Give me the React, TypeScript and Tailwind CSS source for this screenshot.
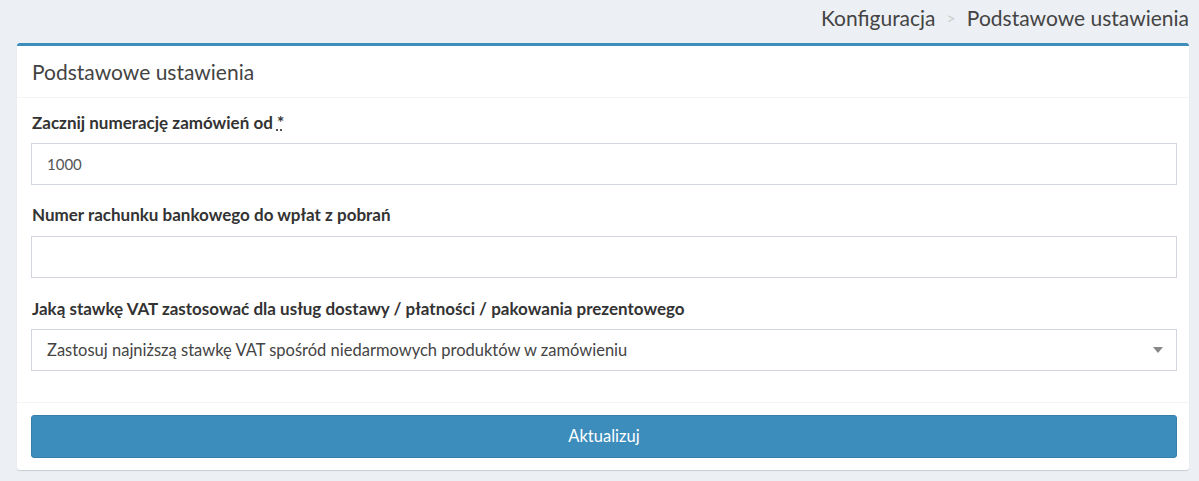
import React from 'react';

const App = () => {
  return (
    <div className="min-h-[481px] bg-[#ecf0f5] pl-[17px] pr-[10px] pt-[5px] pb-[10px] font-[Lato,sans-serif] text-[#333]">
      {/* Breadcrumb */}
      <div className="flex items-center justify-end gap-[8px] h-[26px] text-[21px] text-[#444]">
        <span>Konfiguracja</span>
        <span className="text-[#ccc] text-[16px] px-[3px]">&gt;</span>
        <span>Podstawowe ustawienia</span>
      </div>

      {/* Card */}
      <div className="mt-[12px] bg-white rounded-[3px] border-t-[3px] border-[#3c8dbc] shadow-[0_1px_1px_rgba(0,0,0,0.15)]">
        <div className="h-[52px] px-[15px] flex items-center border-b border-[#f4f4f4]">
          <h3 className="text-[21px] text-[#444]">Podstawowe ustawienia</h3>
        </div>

        <div className="pl-[14px] pr-[12px] pt-[14px] pb-[31px] flex flex-col">
          <label className="text-[17px] font-bold leading-[22px] ml-[1px]">
            Zacznij numerację zamówień od <span className="underline decoration-dotted">*</span>
          </label>
          <input
            className="mt-[9px] h-[42px] border border-[#d2d6de] px-[15px] text-[15px] text-[#555] outline-none"
            defaultValue="1000"
          />

          <label className="mt-[19px] text-[17px] font-bold leading-[22px] ml-[1px]">
            Numer rachunku bankowego do wpłat z pobrań
          </label>
          <input className="mt-[10px] h-[42px] border border-[#d2d6de] px-[15px] text-[15px] outline-none" />

          <label className="mt-[20px] text-[17px] font-bold leading-[22px] ml-[1px]">
            Jaką stawkę VAT zastosować dla usług dostawy / płatności / pakowania prezentowego
          </label>
          <div className="mt-[9px] h-[42px] border border-[#d2d6de] px-[15px] flex items-center justify-between text-[16.5px] text-[#444]">
            <span>Zastosuj najniższą stawkę VAT spośród niedarmowych produktów w zamówieniu</span>
            <svg width="10" height="6" viewBox="0 0 10 6" className="mr-[-2px]">
              <path d="M0 0h10L5 6z" fill="#888" />
            </svg>
          </div>
        </div>

        <div className="border-t border-[#f4f4f4] pl-[14px] pr-[12px] pt-[12px] pb-[12px]">
          <button className="w-full h-[43px] rounded-[3px] bg-[#3c8dbc] border border-[#367fa9] text-white text-[16.5px]">
            Aktualizuj
          </button>
        </div>
      </div>
    </div>
  );
};

export default App;
